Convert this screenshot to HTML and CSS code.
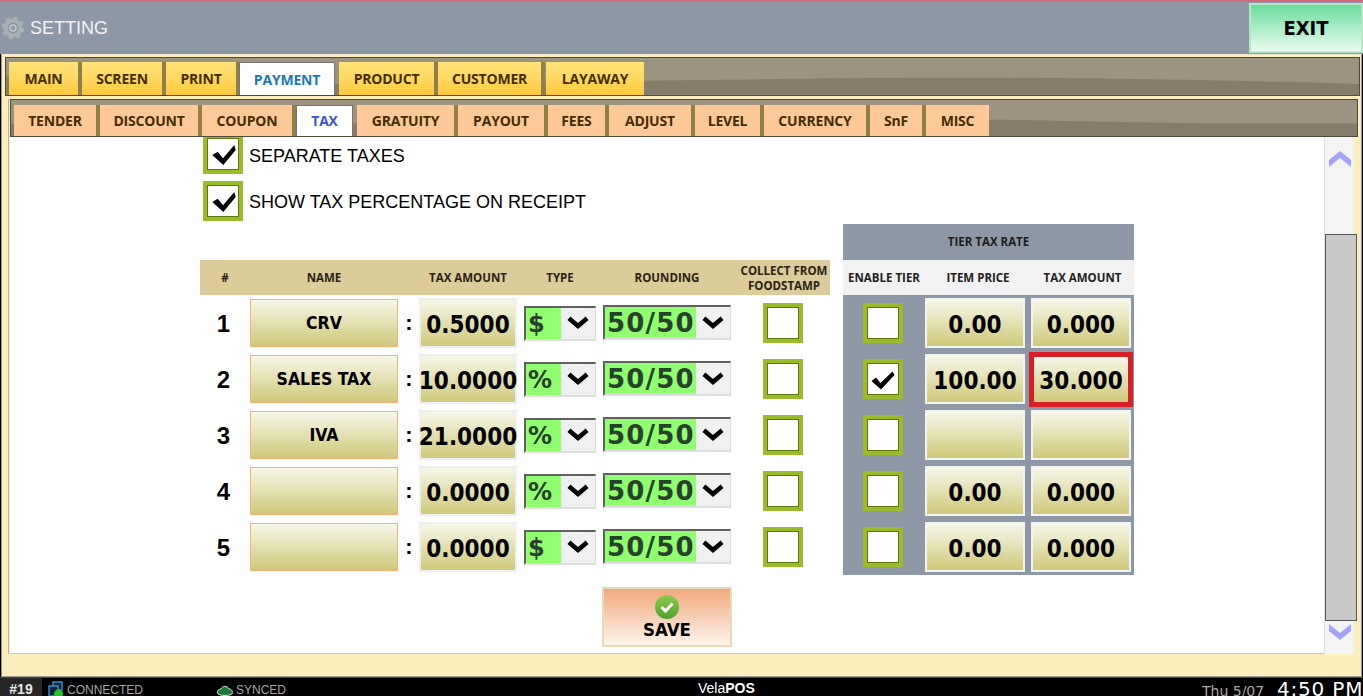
FILE: index.html
```html
<!DOCTYPE html>
<html lang="en">
<head>
    <meta charset="UTF-8">
    <meta name="viewport" content="width=device-width, initial-scale=1.0">
    <title>VelaPOS Setting</title>
    <link rel="stylesheet" href="styles.css">
</head>
<body>
<div class="app">
    <div class="title-bar">
        <svg class="gear" viewBox="0 0 22 22" width="22" height="22">
            <circle cx="11" cy="11" r="7.5" fill="none" stroke="#a9b0b3" stroke-width="4"/>
            <circle cx="11" cy="11" r="10" fill="none" stroke="#a9b0b3" stroke-width="3" stroke-dasharray="4 3.85"/>
            <circle cx="11" cy="11" r="3" fill="none" stroke="#c5cacb" stroke-width="1.5"/>
        </svg>
        <span class="title">SETTING</span>
        <button class="exit">EXIT</button>
    </div>

    <div class="panel">
        <div class="tabbar tabbar-main">
            <svg class="wave" viewBox="0 0 1000 40" preserveAspectRatio="none"><path d="M0 20 C200 32 300 28 500 24 S800 20 1000 28 V40 H0Z" fill="#857d6a"/></svg>
            <div class="tab">MAIN</div>
            <div class="tab tab-screen">SCREEN</div>
            <div class="tab tab-print">PRINT</div>
            <div class="tab active tab-payment">PAYMENT</div>
            <div class="tab tab-product">PRODUCT</div>
            <div class="tab tab-customer">CUSTOMER</div>
            <div class="tab tab-layaway">LAYAWAY</div>
        </div>

        <div class="sub-panel">
            <div class="tabbar tabbar-sub">
                <svg class="wave" viewBox="0 0 1000 40" preserveAspectRatio="none"><path d="M0 26 C200 30 300 24 500 20 S800 28 1000 26 V40 H0Z" fill="#857d6a"/></svg>
                <div class="subtab st-tender">TENDER</div>
                <div class="subtab st-discount">DISCOUNT</div>
                <div class="subtab st-coupon">COUPON</div>
                <div class="subtab active st-tax">TAX</div>
                <div class="subtab st-gratuity">GRATUITY</div>
                <div class="subtab st-payout">PAYOUT</div>
                <div class="subtab st-fees">FEES</div>
                <div class="subtab st-adjust">ADJUST</div>
                <div class="subtab st-level">LEVEL</div>
                <div class="subtab st-currency">CURRENCY</div>
                <div class="subtab st-snf">SnF</div>
                <div class="subtab st-misc">MISC</div>
            </div>

            <div class="content-wrap">
                <div class="content">
                    <div class="option option-first">
                        <div class="check"><svg viewBox="0 0 30 30"><path d="M4.300 16 L9.700 12.700 L15 19.300 L26.300 6 L27.700 11 L15.300 26Z" fill="#000"/></svg></div>
                        <span>SEPARATE TAXES</span>
                    </div>
                    <div class="option">
                        <div class="check"><svg viewBox="0 0 30 30"><path d="M4.300 16 L9.700 12.700 L15 19.300 L26.300 6 L27.700 11 L15.300 26Z" fill="#000"/></svg></div>
                        <span>SHOW TAX PERCENTAGE ON RECEIPT</span>
                    </div>

                    <div class="tables">
                        <div class="tax-table">
                            <div class="tax-row tax-head">
                                <div>#</div>
                                <div>NAME</div>
                                <div></div>
                                <div class="c-amt">TAX AMOUNT</div>
                                <div class="c-type">TYPE</div>
                                <div class="c-round">ROUNDING</div>
                                <div>COLLECT FROM<br>FOODSTAMP</div>
                            </div>

                            <div class="tax-row">
                                <div class="num">1</div>
                                <div class="name-btn">CRV</div>
                                <div class="colon">:</div>
                                <div class="val c-amt">0.5000</div>
                                <div class="select c-type"><span class="sel-val">$</span><span class="sel-arrow"><svg viewBox="0 0 20 12"><path d="M3 2.500 L10 8.500 L17 2.500" fill="none" stroke="#000" stroke-width="3.500"/></svg></span></div>
                                <div class="select round c-round"><span class="sel-val">50/50</span><span class="sel-arrow"><svg viewBox="0 0 20 12"><path d="M3 2.500 L10 8.500 L17 2.500" fill="none" stroke="#000" stroke-width="3.500"/></svg></span></div>
                                <div class="check check-plain"></div>
                            </div>
                            <div class="tax-row">
                                <div class="num">2</div>
                                <div class="name-btn">SALES TAX</div>
                                <div class="colon">:</div>
                                <div class="val c-amt">10.0000</div>
                                <div class="select c-type"><span class="sel-val">%</span><span class="sel-arrow"><svg viewBox="0 0 20 12"><path d="M3 2.500 L10 8.500 L17 2.500" fill="none" stroke="#000" stroke-width="3.500"/></svg></span></div>
                                <div class="select round c-round"><span class="sel-val">50/50</span><span class="sel-arrow"><svg viewBox="0 0 20 12"><path d="M3 2.500 L10 8.500 L17 2.500" fill="none" stroke="#000" stroke-width="3.500"/></svg></span></div>
                                <div class="check check-plain"></div>
                            </div>
                            <div class="tax-row">
                                <div class="num">3</div>
                                <div class="name-btn">IVA</div>
                                <div class="colon">:</div>
                                <div class="val c-amt">21.0000</div>
                                <div class="select c-type"><span class="sel-val">%</span><span class="sel-arrow"><svg viewBox="0 0 20 12"><path d="M3 2.500 L10 8.500 L17 2.500" fill="none" stroke="#000" stroke-width="3.500"/></svg></span></div>
                                <div class="select round c-round"><span class="sel-val">50/50</span><span class="sel-arrow"><svg viewBox="0 0 20 12"><path d="M3 2.500 L10 8.500 L17 2.500" fill="none" stroke="#000" stroke-width="3.500"/></svg></span></div>
                                <div class="check check-plain"></div>
                            </div>
                            <div class="tax-row">
                                <div class="num">4</div>
                                <div class="name-btn"></div>
                                <div class="colon">:</div>
                                <div class="val c-amt">0.0000</div>
                                <div class="select c-type"><span class="sel-val">%</span><span class="sel-arrow"><svg viewBox="0 0 20 12"><path d="M3 2.500 L10 8.500 L17 2.500" fill="none" stroke="#000" stroke-width="3.500"/></svg></span></div>
                                <div class="select round c-round"><span class="sel-val">50/50</span><span class="sel-arrow"><svg viewBox="0 0 20 12"><path d="M3 2.500 L10 8.500 L17 2.500" fill="none" stroke="#000" stroke-width="3.500"/></svg></span></div>
                                <div class="check check-plain"></div>
                            </div>
                            <div class="tax-row">
                                <div class="num">5</div>
                                <div class="name-btn"></div>
                                <div class="colon">:</div>
                                <div class="val c-amt">0.0000</div>
                                <div class="select c-type"><span class="sel-val">$</span><span class="sel-arrow"><svg viewBox="0 0 20 12"><path d="M3 2.500 L10 8.500 L17 2.500" fill="none" stroke="#000" stroke-width="3.500"/></svg></span></div>
                                <div class="select round c-round"><span class="sel-val">50/50</span><span class="sel-arrow"><svg viewBox="0 0 20 12"><path d="M3 2.500 L10 8.500 L17 2.500" fill="none" stroke="#000" stroke-width="3.500"/></svg></span></div>
                                <div class="check check-plain"></div>
                            </div>
                        </div>

                        <div class="tier">
                            <div class="tier-title">TIER TAX RATE</div>
                            <div class="tier-row tier-head">
                                <div>ENABLE TIER</div>
                                <div>ITEM PRICE</div>
                                <div>TAX AMOUNT</div>
                            </div>
                            <div class="tier-row">
                                <div class="check check-dark"></div>
                                <div class="tier-val">0.00</div>
                                <div class="tier-val">0.000</div>
                            </div>
                            <div class="tier-row">
                                <div class="check check-dark"><svg viewBox="0 0 30 30"><path d="M3.500 17 L8 13.500 L12.500 19 L24.500 7.500 L26.500 11 L13 25.500Z" fill="#000"/></svg></div>
                                <div class="tier-val">100.00</div>
                                <div class="tier-val selected">30.000</div>
                            </div>
                            <div class="tier-row">
                                <div class="check check-dark"></div>
                                <div class="tier-val"></div>
                                <div class="tier-val"></div>
                            </div>
                            <div class="tier-row">
                                <div class="check check-dark"></div>
                                <div class="tier-val">0.00</div>
                                <div class="tier-val">0.000</div>
                            </div>
                            <div class="tier-row">
                                <div class="check check-dark"></div>
                                <div class="tier-val">0.00</div>
                                <div class="tier-val">0.000</div>
                            </div>
                        </div>
                    </div>

                    <button class="save">
                        <svg viewBox="0 0 24 24" width="24" height="24">
                            <defs><linearGradient id="saveg" x1="0" y1="0" x2="0" y2="1"><stop offset="0" stop-color="#8ccb4e"/><stop offset="1" stop-color="#4fa12a"/></linearGradient></defs>
                            <circle cx="12" cy="12" r="12" fill="url(#saveg)"/>
                            <path d="M6.500 12 L10.500 16 L17.500 8.500" fill="none" stroke="#fff" stroke-width="3"/>
                        </svg>
                        <span>SAVE</span>
                    </button>
                </div>

                <div class="scrollbar">
                    <svg class="scroll-arrow" viewBox="0 0 22 16" width="22" height="16"><path d="M0 9 L11 0 L22 9 V16 L11 7 L0 16Z" fill="#a3a3fb"/></svg>
                    <div class="thumb"></div>
                    <svg class="scroll-arrow" viewBox="0 0 22 16" width="22" height="16"><path d="M0 0 L11 9 L22 0 V7 L11 16 L0 7Z" fill="#a3a3fb"/></svg>
                </div>
            </div>
        </div>
    </div>

    <div class="status">
        <div class="station">#19</div>
        <svg class="st-icon" viewBox="0 0 16 18" width="16" height="18">
            <rect x="5" y="1" width="9" height="8" fill="#10253f" stroke="#3b88c8" stroke-width="1.500"/>
            <rect x="1" y="5" width="9" height="10" fill="#10253f" stroke="#3b88c8" stroke-width="1.500"/>
            <circle cx="10.500" cy="13" r="4.500" fill="#22c422"/>
        </svg>
        <span class="st-text st-connected">CONNECTED</span>
        <svg class="st-icon cloud" viewBox="0 0 16 12" width="16" height="12">
            <path d="M1 10 C-1 7 2 5 4 5 C5 2 10 1 12 5 C15 5 16 8 15 10 C12 12 4 12 1 10Z" fill="#1d7a3a" stroke="#d8e4d8" stroke-width="1"/>
        </svg>
        <span class="st-text">SYNCED</span>
        <span class="brand">Vela<b>POS</b></span>
        <span class="date">Thu 5/07</span>
        <span class="time">4:50 PM</span>
    </div>
</div>
</body>
</html>
```

FILE: styles.css
```css
* {
    box-sizing: border-box;
}
html, body {
    margin: 0;
    height: 100%;
    overflow: hidden;
}
body {
    font-family: "Liberation Sans", Arial, sans-serif;
    background: #000;
}
.app {
    width: 1363px;
    height: 696px;
    display: flex;
    flex-direction: column;
    overflow: hidden;
}

/* title */
.title-bar {
    height: 54px;
    flex: none;
    background: #8e97a6;
    border-top: 2px solid #d4697c;
    display: flex;
    align-items: center;
    padding-left: 2px;
}
.gear {
    flex: none;
}
.title {
    margin-left: 6px;
    font-size: 18px;
    color: #f2f3f6;
}
.exit {
    margin-left: auto;
    width: 114px;
    height: 50px;
    border: 2px solid #b6e6c6;
    background: linear-gradient(#6bdc9c, #eafcf0);
    font-family: "DejaVu Sans Condensed", "DejaVu Sans", sans-serif;
    font-weight: bold;
    font-size: 20px;
    color: #000;
    padding: 0;
}

/* panels */
.panel {
    flex: 1;
    margin: 0 1px 0 1px;
    background: #fdeebd;
    border: 1px solid #9b978a;
    border-top: 1px solid #f4ead0;
    padding: 2px 1px 0 3px;
    min-height: 0;
}
.tabbar {
    position: relative;
    display: flex;
    background: #9c9480;
    border: 1px solid #4f4a3c;
    overflow: hidden;
}
.wave {
    position: absolute;
    left: 0;
    top: 0;
    width: 100%;
    height: 100%;
}
.tabbar-main {
    height: 39px;
    padding: 4px 0 0 3px;
}
.sub-panel {
    margin: 3px 2px 0 3px;
    border-left: 1px solid #b8b09a;
    padding-left: 1px;
}
.tabbar-sub {
    height: 38px;
    padding: 5px 0 0 3px;
}
.tab, .subtab {
    position: relative;
    display: flex;
    align-items: center;
    justify-content: center;
    font-family: "Open Sans", sans-serif;
    font-weight: bold;
    font-size: 14px;
    letter-spacing: -0.200px;
    color: #472c00;
    flex: none;
    box-shadow: 4px 0 0 #8f7f48;
}
.subtab {
    padding-bottom: 2px;
}
.tab {
    width: 69px;
    height: 33px;
    margin-right: 4px;
    background: linear-gradient(#ffe27a, #ffd75c 55%, #fbc83c);
}
.subtab {
    height: 32px;
    margin-right: 4px;
    background: #fdc998;
}
.tab.active, .subtab.active {
    background: #fff;
    box-shadow: none;
    border: 1px solid #77756c;
    border-bottom: 0;
}
.tab.active {
    color: #1a78b4;
}
.subtab.active {
    color: #3f55c8;
}
.tab-screen { width: 80px; }
.tab-print { width: 70px; }
.tab-payment { width: 96px; margin-left: -1px; }
.tab-product { width: 95px; }
.tab-customer { width: 103px; }
.tab-layaway { width: 98px; margin-left: 1px; margin-right: 0; box-shadow: none; }

.st-tender { width: 82px; }
.st-discount { width: 98px; }
.st-coupon { width: 90px; }
.st-tax { width: 57px; }
.st-gratuity { width: 97px; }
.st-payout { width: 86px; }
.st-fees { width: 57px; }
.st-adjust { width: 82px; }
.st-level { width: 65px; }
.st-currency { width: 102px; }
.st-snf { width: 52px; }
.st-misc { width: 63px; margin-right: 0; box-shadow: none; }

.content-wrap {
    display: flex;
    height: 517px;
}
.content {
    width: 1314px;
    background: #fff;
    border-bottom: 1px solid #c9c7c0;
    padding-left: 193px;
    overflow: hidden;
}
.scrollbar {
    width: 30px;
    background: #f4f4f4;
    display: flex;
    flex-direction: column;
    align-items: center;
    padding-top: 14px;
    border-left: 1px solid #e0e0e0;
}
.thumb {
    width: 32px;
    height: 387px;
    margin: 67px 0 3px 3px;
    flex: none;
    background: #c9c9c9;
    border: 1px solid #55565a;
}

/* check options */
.option {
    display: flex;
    align-items: center;
    height: 40px;
    margin-bottom: 4px;
    font-size: 18px;
    color: #000;
}
.option-first {
    margin-top: -3px;
    margin-bottom: 7px;
}
.option span {
    margin-left: 6px;
    padding-top: 2px;
}
.option-first span {
    padding-top: 4px;
}
.check {
    width: 40px;
    height: 40px;
    flex: none;
    border: 4px solid #99bc28;
    outline: 1px solid #5c7510;
    outline-offset: -5px;
    background: #fff;
    padding: 1px;
}
.check svg {
    display: block;
    width: 100%;
    height: 100%;
}

/* tables */
.tables {
    display: flex;
    align-items: flex-end;
    margin: -1px 0 0 -3px;
    gap: 13px;
}
.tax-table {
    width: 630px;
}
.tax-row {
    display: grid;
    grid-template-columns: 50px 148px 21px 105px 79px 135px 92px;
    align-items: center;
    height: 56px;
}
.tax-head {
    height: 35px;
    background: #dccb9b;
    font-family: "Open Sans", sans-serif;
    font-weight: bold;
    font-size: 11.500px;
    line-height: 15px;
    color: #2b2410;
    text-align: center;
    white-space: nowrap;
}
.c-amt, .c-type, .c-round {
    margin-right: 7px;
}
.num {
    font-size: 24px;
    font-weight: bold;
    text-align: center;
    padding-right: 3px;
    padding-top: 1px;
}
.name-btn {
    height: 48px;
    border: 1px solid #f2b374;
    background: linear-gradient(#f7f7e9, #cfc97a);
    display: flex;
    align-items: center;
    justify-content: center;
    font-family: "DejaVu Sans Condensed", "DejaVu Sans", sans-serif;
    font-weight: bold;
    font-size: 17.500px;
}
.colon {
    font-size: 22px;
    font-weight: bold;
    text-align: center;
    padding-left: 1px;
}
.val {
    height: 50px;
    border: 2px solid #f0f0f0;
    background: linear-gradient(#f7f7e9, #cfc97a);
    display: flex;
    align-items: center;
    justify-content: center;
    font-family: "DejaVu Sans Condensed", "DejaVu Sans", sans-serif;
    font-weight: bold;
    font-size: 24px;
    white-space: nowrap;
    padding-top: 4px;
}
.select {
    height: 35px;
    display: flex;
    background: #90ff70;
    border-style: solid;
    border-width: 2px 1px 2px 2px;
    border-color: #5f625c #dedede #dedede #5f625c;
}
.round {
    margin-top: -1px;
}
.sel-val {
    flex: 1;
    padding-left: 2px;
    font-family: "DejaVu Sans", sans-serif;
    font-weight: bold;
    font-size: 24px;
    line-height: 32px;
    color: #27412a;
    letter-spacing: 1.200px;
}
.round .sel-val {
    font-size: 26px;
}
.sel-arrow {
    width: 34px;
    flex: none;
    background: #f0f0f0;
    display: flex;
    align-items: center;
    justify-content: center;
}
.sel-arrow svg {
    width: 26px;
}
.check-plain {
    justify-self: center;
    margin-right: 2px;
}

/* tier */
.tier {
    width: 291px;
    background: #8e97a6;
}
.tier-title {
    height: 36px;
    padding-bottom: 2px;
    display: flex;
    align-items: center;
    justify-content: center;
    font-family: "Open Sans", sans-serif;
    font-weight: bold;
    font-size: 11.500px;
    color: #1d1d1d;
}
.tier-row {
    display: grid;
    grid-template-columns: 82px 106px 103px;
    align-items: center;
    height: 56px;
}
.tier-head {
    height: 35px;
    background: #f2f2f2;
    font-family: "Open Sans", sans-serif;
    font-weight: bold;
    font-size: 11.500px;
    color: #222;
    text-align: center;
    white-space: nowrap;
}
.check-dark {
    justify-self: center;
    margin-right: 2px;
}
.tier-val {
    width: 100px;
    height: 50px;
    border: 2px solid #f4f4f4;
    background: linear-gradient(#f7f7e9, #cfc97a);
    display: flex;
    align-items: center;
    justify-content: center;
    font-family: "DejaVu Sans Condensed", "DejaVu Sans", sans-serif;
    font-weight: bold;
    font-size: 24px;
    padding-top: 4px;
}
.tier-val.selected {
    width: 104px;
    height: 55px;
    margin-left: -2px;
    border: 5px solid #d81f26;
}

.save {
    display: flex;
    flex-direction: column;
    align-items: center;
    width: 130px;
    height: 60px;
    margin: 12px 0 0 399px;
    padding: 6px 0 0;
    border: 2px solid #e7dab6;
    background: linear-gradient(#f0a97f, #fff4ea);
    font-family: "DejaVu Sans Condensed", "DejaVu Sans", sans-serif;
    font-weight: bold;
    font-size: 18.500px;
    line-height: 21px;
    color: #000;
}

/* status bar */
.status {
    height: 19px;
    flex: none;
    background: #000;
    border-top: 1px solid #444;
    display: flex;
    align-items: flex-start;
    position: relative;
    overflow: hidden;
    color: #fff;
    white-space: nowrap;
}
.station {
    width: 42px;
    height: 18px;
    background: #262626;
    text-align: center;
    font-weight: bold;
    font-size: 14px;
    line-height: 22px;
    color: #e8e8e8;
}
.st-icon {
    margin: 3px 0 0 6px;
    flex: none;
}
.cloud {
    margin: 6px 0 0 74px;
}
.st-text {
    margin-left: 3px;
    font-size: 12px;
    line-height: 25px;
    color: #a6a6a6;
}
.brand {
    position: absolute;
    left: 698px;
    top: 1px;
    font-size: 14px;
    line-height: 18px;
}
.date {
    position: absolute;
    left: 1202px;
    top: 3px;
    font-family: "DejaVu Sans", sans-serif;
    font-size: 14px;
    line-height: 20px;
    color: #aaa89e;
}
.time {
    position: absolute;
    left: 1277px;
    top: -2px;
    font-family: "DejaVu Sans", sans-serif;
    font-size: 20px;
    line-height: 26px;
    color: #fff;
    letter-spacing: 0.800px;
}
```
